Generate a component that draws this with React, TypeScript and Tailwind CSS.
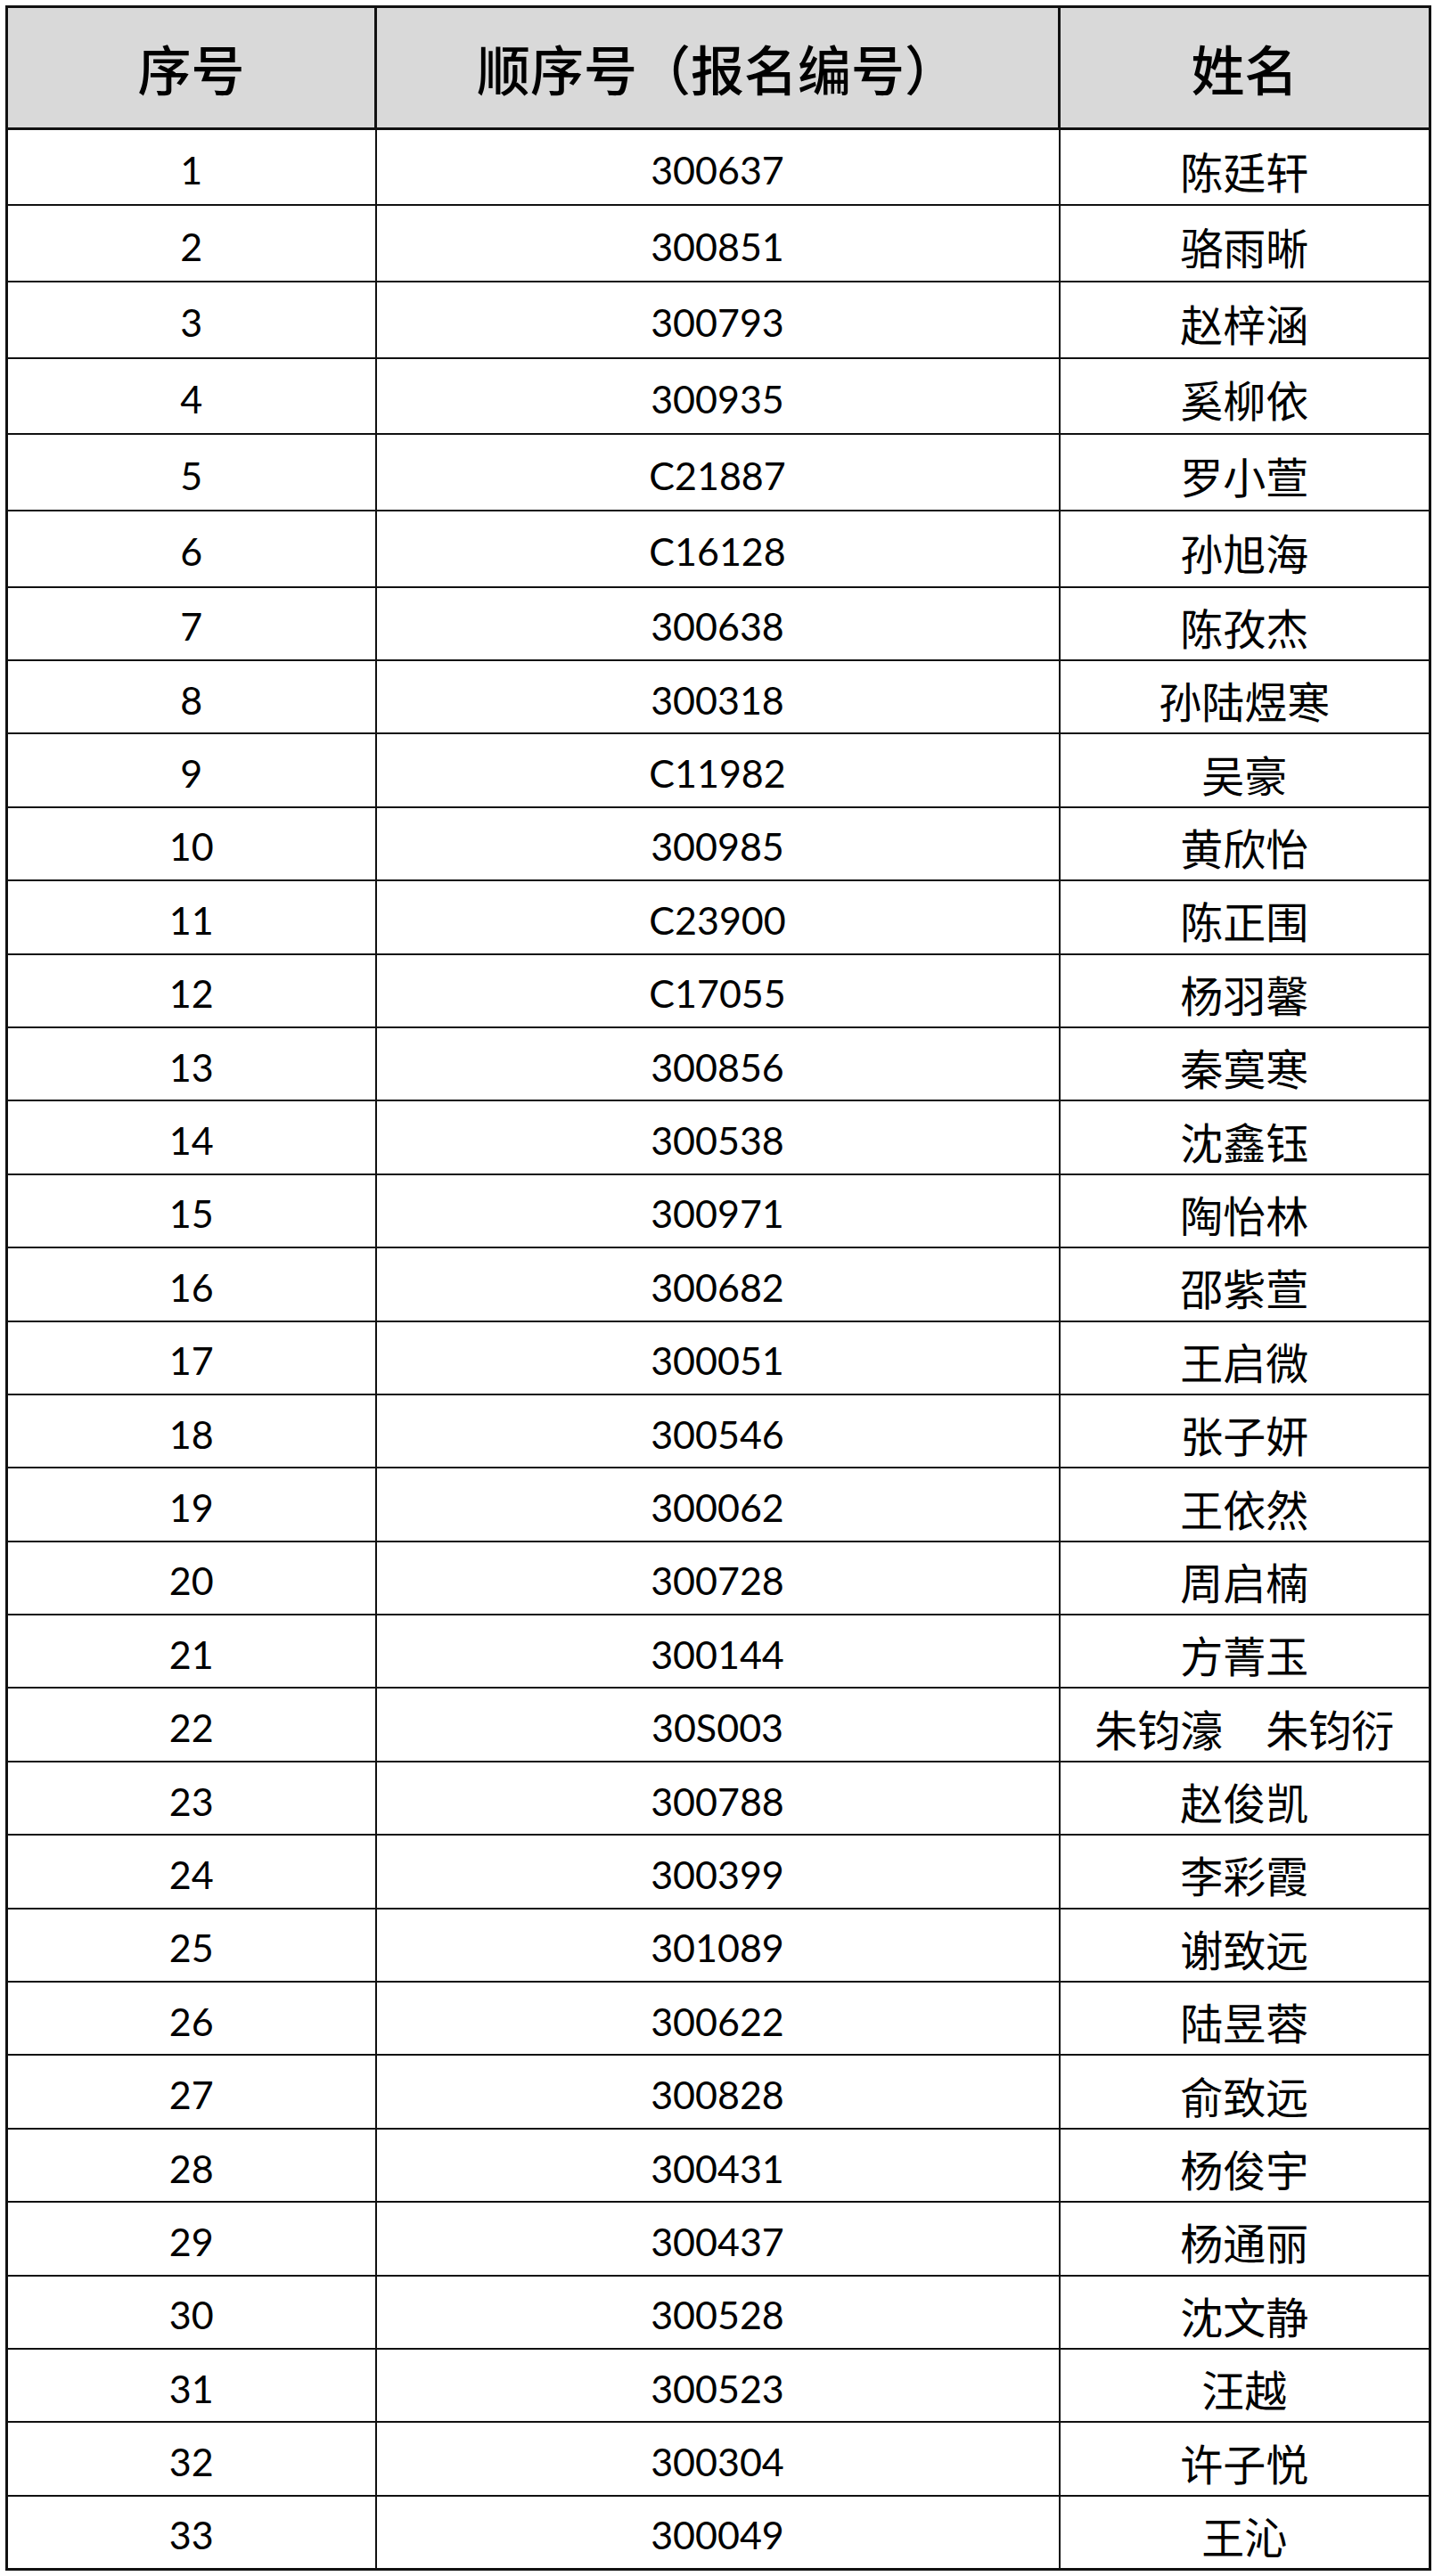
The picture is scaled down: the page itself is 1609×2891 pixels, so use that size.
const rows: [string, string][] = [
  ['300637', '陈廷轩'],
  ['300851', '骆雨晰'],
  ['300793', '赵梓涵'],
  ['300935', '奚柳依'],
  ['C21887', '罗小萱'],
  ['C16128', '孙旭海'],
  ['300638', '陈孜杰'],
  ['300318', '孙陆煜寒'],
  ['C11982', '吴豪'],
  ['300985', '黄欣怡'],
  ['C23900', '陈正围'],
  ['C17055', '杨羽馨'],
  ['300856', '秦寞寒'],
  ['300538', '沈鑫钰'],
  ['300971', '陶怡林'],
  ['300682', '邵紫萱'],
  ['300051', '王启微'],
  ['300546', '张子妍'],
  ['300062', '王依然'],
  ['300728', '周启楠'],
  ['300144', '方菁玉'],
  ['30S003', '朱钧濠　朱钧衍'],
  ['300788', '赵俊凯'],
  ['300399', '李彩霞'],
  ['301089', '谢致远'],
  ['300622', '陆昱蓉'],
  ['300828', '俞致远'],
  ['300431', '杨俊宇'],
  ['300437', '杨通丽'],
  ['300528', '沈文静'],
  ['300523', '汪越'],
  ['300304', '许子悦'],
  ['300049', '王沁'],
];

const latin = "font-['Lato','Liberation_Sans',sans-serif]";
const cjk = "font-['Noto_Sans_CJK_SC',sans-serif]";

export default function App() {
  return (
    <div className="min-h-screen bg-white pl-[6px] pt-[6px]">
      <table className="w-[1597px] table-fixed border-collapse border-[3px] border-[#111] text-black">
        <colgroup>
          <col className="w-[414px]" />
          <col className="w-[767px]" />
          <col className="w-[416px]" />
        </colgroup>
        <thead>
          <tr className="h-[137px] bg-[#d9d9d9]">
            <th className={`border-[3px] border-[#111] text-center text-[60px] font-medium ${cjk}`}>序号</th>
            <th className={`border-[3px] border-[#111] text-center text-[60px] font-medium ${cjk}`}>顺序号（报名编号）</th>
            <th className={`border-[3px] border-[#111] text-center text-[60px] font-medium ${cjk}`}>姓名</th>
          </tr>
        </thead>
        <tbody>
          {rows.map(([code, name], i) => (
            <tr key={i} className={i < 6 ? 'h-[85.7px]' : 'h-[82.4px]'}>
              <td className={`border-2 border-[#111] pt-[6px] text-center text-[43px] leading-none ${latin}`}>{i + 1}</td>
              <td className={`border-2 border-[#111] pt-[6px] text-center text-[43px] leading-none ${latin}`}>{code}</td>
              <td className={`border-2 border-[#111] pt-[6px] text-center text-[48px] leading-none ${cjk}`}>{name}</td>
            </tr>
          ))}
        </tbody>
      </table>
    </div>
  );
}
